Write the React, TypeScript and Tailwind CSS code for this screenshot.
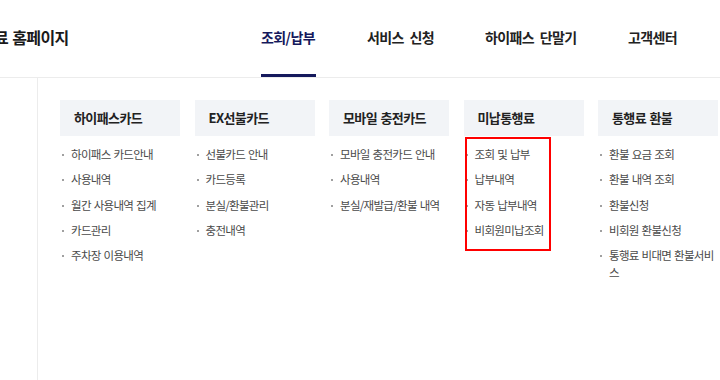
import React from "react";

const font = { fontFamily: '"Noto Sans CJK KR", "Noto Sans", sans-serif' };

const nav = [
  { label: "조회/납부", active: true },
  { label: "서비스 신청" },
  { label: "하이패스 단말기" },
  { label: "고객센터" },
];

const columns: { title: string; items: string[]; highlight?: boolean }[] = [
  { title: "하이패스카드", items: ["하이패스 카드안내", "사용내역", "월간 사용내역 집계", "카드관리", "주차장 이용내역"] },
  { title: "EX선불카드", items: ["선불카드 안내", "카드등록", "분실/환불관리", "충전내역"] },
  { title: "모바일 충전카드", items: ["모바일 충전카드 안내", "사용내역", "분실/재발급/환불 내역"] },
  { title: "미납통행료", items: ["조회 및 납부", "납부내역", "자동 납부내역", "비회원미납조회"], highlight: true },
  { title: "통행료 환불", items: ["환불 요금 조회", "환불 내역 조회", "환불신청", "비회원 환불신청", "통행료 비대면 환불서비스"] },
];

export default function App() {
  return (
    <div className="w-[720px] h-[380px] overflow-hidden bg-white" style={font}>
      <header className="h-[78px] border-b border-[#ececec] flex items-start">
        <div className="w-[240px] h-[74px] flex items-center overflow-hidden">
          <span className="ml-[-6px] text-[16px] font-bold tracking-[-0.6px] [word-spacing:1px] text-[#1a1a1a] whitespace-nowrap">료 홈페이지</span>
        </div>
        <nav className="flex h-[77px] ml-[21px]">
          {nav.map((n, i) => (
            <div
              key={n.label}
              className={
                "h-full flex items-center relative " +
                (i === 0 ? "w-[106px]" : i === 1 ? "w-[118px]" : i === 2 ? "w-[143px]" : "")
              }
            >
              <span
                className={
                  "text-[14px] font-bold tracking-[-0.6px] [word-spacing:3px] whitespace-nowrap mb-[3px] " +
                  (n.active ? "text-[#15195c]" : "text-[#222]")
                }
              >
                {n.label}
              </span>
              {n.active && <div className="absolute left-0 bottom-0 w-[55px] h-[3px] bg-[#15195c]" />}
            </div>
          ))}
        </nav>
      </header>
      <div className="flex h-[302px]">
        <div className="w-[38px] border-r border-[#ececec]" />
        <div className="flex gap-[14.5px] pl-[22px] pt-[22px]">
          {columns.map((c) => (
            <div key={c.title} className="w-[120px] shrink-0 relative">
              <div className="h-[36px] bg-[#f2f4f7] flex items-center pl-[14px]">
                <span className="text-[13px] font-bold tracking-[-0.6px] [word-spacing:1px] text-[#222] whitespace-nowrap">{c.title}</span>
              </div>
              <ul className="pt-[10px] flex flex-col gap-[8.25px]">
                {c.items.map((it) => (
                  <li key={it} className="flex items-start text-[11.5px] leading-[17px] tracking-[-0.7px] [word-spacing:1px] text-[#4a4a4a]">
                    <span className="w-[2px] h-[2px] bg-[#a0a0a0] mt-[8px] ml-[2px] mr-[7px] shrink-0" />
                    <span className="w-[108px]">{it}</span>
                  </li>
                ))}
              </ul>
              {c.highlight && (
                <div className="absolute left-[1px] top-[37px] w-[86px] h-[114px] border-2 border-[#ff0000]" />
              )}
            </div>
          ))}
        </div>
      </div>
    </div>
  );
}
